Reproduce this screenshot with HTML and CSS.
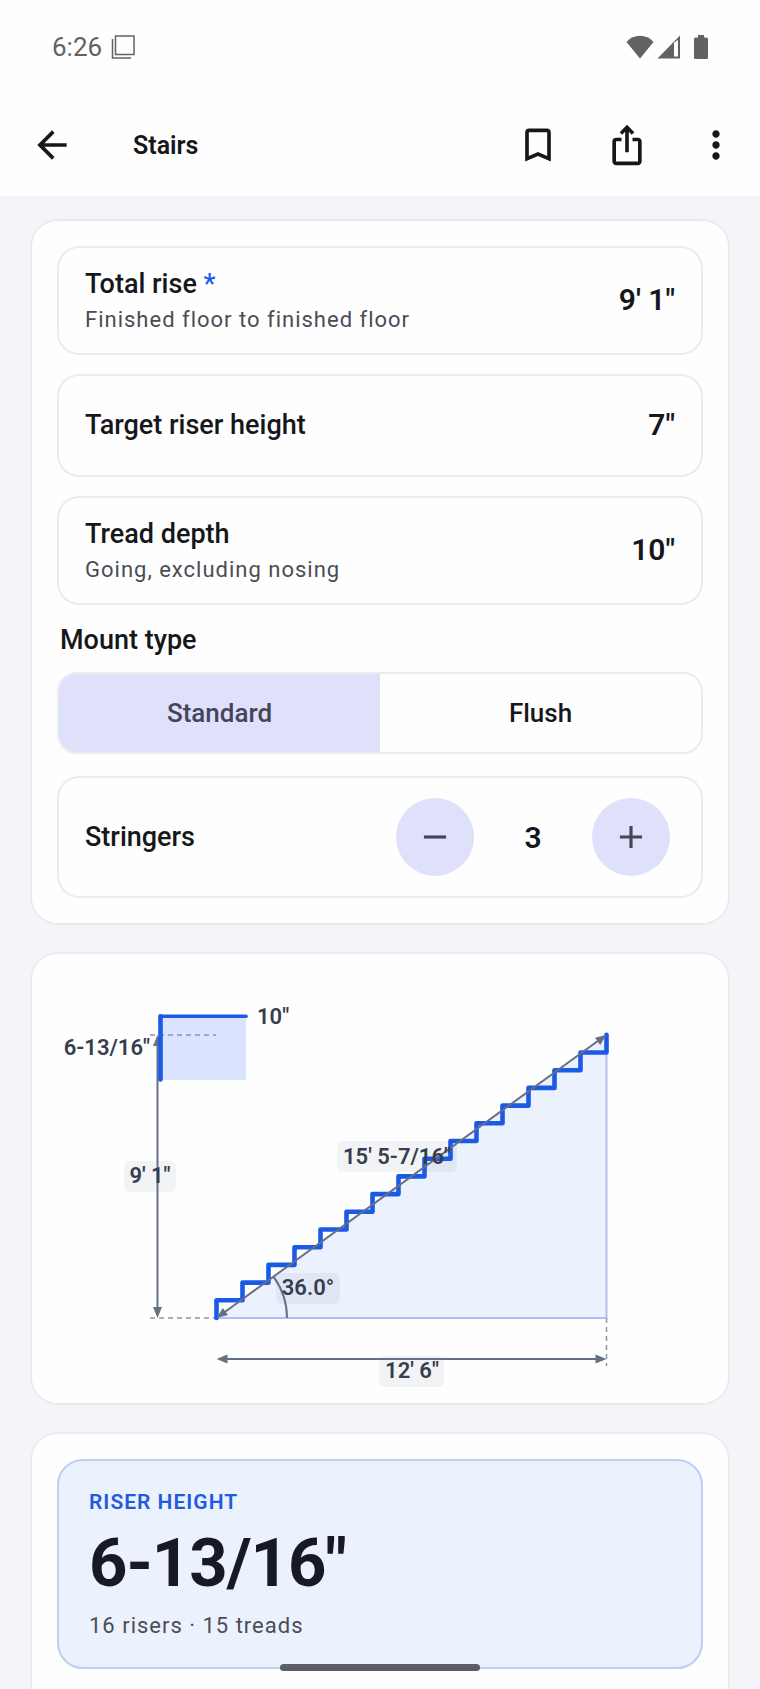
FILE: index.html
```html
<!DOCTYPE html>
<html lang="en">
<head>
  <meta charset="UTF-8" />
  <meta name="viewport" content="width=device-width, initial-scale=1.0" />
  <title>Stairs</title>
  <link rel="stylesheet" href="styles.css">
</head>
<body>
  <div class="status-bar">
    <span class="clock">6:26</span>
    <svg class="status-icon" width="24" height="24" viewBox="0 0 24 24" fill="none" stroke="#626262" stroke-width="1.5">
      <rect x="4.5" y="1" width="18.5" height="18.5" />
      <path d="M1.5 4v19H20" />
    </svg>
    <div class="status-right">
      <svg width="28" height="24" viewBox="0 0 28 24" fill="#626262"><path d="M14 23.500L.5 7Q6 .8 14 .8T27.500 7z" /></svg>
      <svg width="24" height="24" viewBox="0 0 24 24" fill="#626262"><path fill-rule="evenodd" d="M23 .5V23.500H.5zM17 7.500V21.500H21V5z" /></svg>
      <svg class="battery" width="16" height="24" viewBox="0 0 16 24" fill="#626262"><path d="M5 0h6v2.500h2.500Q15 2.500 15 4v18.500Q15 24 13.500 24h-11Q1 24 1 22.500V4Q1 2.500 2.500 2.500H5z" /></svg>
    </div>
  </div>

  <header class="app-bar">
    <button class="icon-btn" aria-label="Back">
      <svg viewBox="0 0 24 24"><path d="M20 11H7.830l5.590-5.590L12 4l-8 8 8 8 1.410-1.410L7.830 13H20v-2z" /></svg>
    </button>
    <h1>Stairs</h1>
    <div class="actions">
      <button class="icon-btn" aria-label="Bookmark">
        <svg viewBox="0 0 24 24"><path d="M17 3H7c-1.100 0-2 .9-2 2v16l7-3 7 3V5c0-1.100-.9-2-2-2zm0 15l-5-2.180L7 18V5h10v13z" /></svg>
      </button>
      <button class="icon-btn" aria-label="Share">
        <svg viewBox="0 0 24 24"><path d="M16 5l-1.420 1.420-1.590-1.590V16h-1.980V4.830L9.420 6.420 8 5l4-4 4 4zm4 5v11c0 1.100-.9 2-2 2H6c-1.110 0-2-.9-2-2V10c0-1.110.89-2 2-2h3v2H6v11h12V10h-3V8h3c1.100 0 2 .89 2 2z" /></svg>
      </button>
      <button class="icon-btn" aria-label="More">
        <svg viewBox="0 0 24 24"><path d="M12 8c1.100 0 2-.9 2-2s-.9-2-2-2-2 .9-2 2 .9 2 2 2zm0 2c-1.100 0-2 .9-2 2s.9 2 2 2 2-.9 2-2-.9-2-2-2zm0 6c-1.100 0-2 .9-2 2s.9 2 2 2 2-.9 2-2-.9-2-2-2z" /></svg>
      </button>
    </div>
  </header>

  <main>
    <section class="card form-card">
      <div class="fields">
        <label class="field">
          <span class="field-text">
            <span class="label">Total rise <span class="required">*</span></span>
            <span class="hint">Finished floor to finished floor</span>
          </span>
          <input class="value" type="text" value="9' 1&quot;">
        </label>
        <label class="field">
          <span class="label">Target riser height</span>
          <input class="value" type="text" value="7&quot;">
        </label>
        <label class="field">
          <span class="field-text">
            <span class="label">Tread depth</span>
            <span class="hint">Going, excluding nosing</span>
          </span>
          <input class="value" type="text" value="10&quot;">
        </label>
      </div>

      <div class="label group-label" id="mount-label">Mount type</div>
      <div class="segmented" role="radiogroup" aria-labelledby="mount-label">
        <label class="segment"><input type="radio" name="mount" checked><span>Standard</span></label>
        <label class="segment"><input type="radio" name="mount"><span>Flush</span></label>
      </div>

      <div class="field stringers">
        <span class="label">Stringers</span>
        <div class="stepper">
          <button class="step-btn" id="minus" aria-label="Fewer stringers">
            <svg viewBox="0 0 24 24"><path d="M19 13H5v-2h14v2z" /></svg>
          </button>
          <output class="value" id="stringers">3</output>
          <button class="step-btn" id="plus" aria-label="More stringers">
            <svg viewBox="0 0 24 24"><path d="M19 13h-6v6h-2v-6H5v-2h6V5h2v6h6v2z" /></svg>
          </button>
        </div>
      </div>
    </section>

    <section class="card">
      <svg class="diagram" viewBox="0 0 696 449" role="img" aria-label="Stair diagram">
        <!-- area under the stringer -->
        <path d="M184.500 364L574.500 80.800V364z" fill="#ecf1fe" />
        <path d="M184.500 364H574.500V81" fill="none" stroke="#adc0f0" stroke-width="2" />

        <!-- riser detail -->
        <rect x="128" y="62" width="86" height="64" fill="#dbe4fe" />

        <g class="guide">
          <path d="M118 81H184" />
          <path d="M118 364H184" />
          <path d="M574.500 364V412" />
        </g>

        <g class="chip">
          <rect x="92" y="207" width="52" height="31" rx="6" />
          <rect x="305" y="187" width="120" height="31" rx="6" />
          <rect x="244" y="319" width="64" height="31" rx="6" />
          <rect x="347" y="402" width="65" height="31" rx="6" />
        </g>

        <!-- rise and run -->
        <g class="dim">
          <path d="M125.500 84V360" />
          <path d="M188 405H570" />
        </g>
        <g class="arrow">
          <path d="M125.500 81l4.500 11h-9z" />
          <path d="M125.500 364l4.500-11h-9z" />
          <path d="M184.500 405l11-4.500v9z" />
          <path d="M574.500 405l-11-4.500v9z" />
        </g>

        <!-- steps: 16 risers, 15 treads -->
        <path class="steps" d="M184.500 364v-17.700h26v-17.700h26v-17.700h26v-17.700h26v-17.700h26v-17.700h26v-17.700h26v-17.700h26v-17.700h26v-17.700h26v-17.700h26v-17.700h26v-17.700h26v-17.700h26v-17.700h26v-17.700" />
        <path class="steps" d="M128.500 125.500V62.300" />
        <path class="steps tread" d="M128.500 62.300H214" />

        <g class="dim">
          <path d="M188 361.500L571 83.300" />
          <path d="M255 364A70.500 70.500 0 0 0 241.500 322.600" />
        </g>
        <g class="arrow">
          <path d="M184.500 364l6.300-10.100 5.200 7.200z" />
          <path d="M574.500 80.800l-6.300 10.100-5.200-7.200z" />
        </g>

        <g class="dim-text">
          <text x="225" y="70">10"</text>
          <text x="118" y="101" text-anchor="end">6-13/16"</text>
          <text x="118" y="229" text-anchor="middle">9' 1"</text>
          <text x="365" y="210" text-anchor="middle">15' 5-7/16"</text>
          <text x="276" y="341" text-anchor="middle">36.0°</text>
          <text x="380" y="424" text-anchor="middle">12' 6"</text>
        </g>
      </svg>
    </section>

    <section class="card result-card">
      <div class="result">
        <div class="result-label">RISER HEIGHT</div>
        <div class="result-value">6-13/16"</div>
        <div class="hint">16 risers · 15 treads</div>
      </div>
    </section>
  </main>

  <div class="home-pill"></div>

  <script>
    const out = document.getElementById("stringers");

    document.getElementById("minus").addEventListener("click", () => {
      out.value = Math.max(2, Number(out.value) - 1);
    });
    document.getElementById("plus").addEventListener("click", () => {
      out.value = Number(out.value) + 1;
    });
  </script>
</body>
</html>
```
FILE: styles.css
```css
* {
  box-sizing: border-box;
}
body {
  margin: 0;
  height: 100vh;
  display: flex;
  flex-direction: column;
  overflow: hidden;
  font-family: Roboto, "Noto Sans", sans-serif;
  color: #15171b;
  background: #f3f5f9;
}
button {
  border: none;
  padding: 0;
  background: none;
  color: inherit;
  cursor: pointer;
}
svg {
  display: block;
}

/* top bars */
.status-bar {
  flex: none;
  display: flex;
  align-items: center;
  height: 92px;
  padding: 2px 51px 0 52px;
  background: #fefefe;
}
.clock {
  font-size: 26px;
  color: #626262;
}
.status-icon {
  margin-left: 9px;
}
.status-right {
  display: flex;
  gap: 3px;
  margin-left: auto;
}
.battery {
  margin-left: 9px;
}
.app-bar {
  flex: none;
  display: flex;
  align-items: center;
  height: 104px;
  padding: 2px 22px 0 30px;
  background: #fefefe;
}
.app-bar h1 {
  margin: 0 0 0 59px;
  font-size: 25px;
  font-weight: 600;
}
.actions {
  display: flex;
  gap: 45px;
  margin-left: auto;
}
.icon-btn svg {
  width: 44px;
  height: 44px;
  fill: #15171b;
}

main {
  flex: 1;
  min-height: 0;
  overflow: hidden;
  padding: 23px 30px 0;
}
.card {
  margin-bottom: 27px;
  border: 2px solid #e9ebee;
  border-radius: 28px;
  background: #fefefe;
}
.form-card {
  padding: 25px;
}

/* input rows */
.fields {
  display: flex;
  flex-direction: column;
  gap: 19px;
}
.field {
  display: flex;
  align-items: center;
  justify-content: space-between;
  min-height: 103px;
  padding: 18px 26px;
  border: 2px solid #e9ebec;
  border-radius: 22px;
}
.field-text {
  display: flex;
  flex-direction: column;
  gap: 2px;
}
.label {
  font-size: 27px;
  line-height: 37px;
  font-weight: 500;
}
.required {
  color: #1f5ae8;
}
.hint {
  font-size: 22px;
  line-height: 30px;
  letter-spacing: 1px;
  color: #4a4d53;
}
.value {
  font-family: inherit;
  font-size: 30px;
  font-weight: 600;
  color: #15171b;
}
input.value {
  width: 160px;
  padding: 0 0 2px;
  border: none;
  outline: none;
  background: none;
  text-align: right;
}
.group-label {
  margin: 17px 3px 13px;
}
.segmented {
  display: flex;
  height: 82px;
  border: 2px solid #e9ebec;
  border-radius: 20px;
  overflow: hidden;
}
.segment {
  flex: 1;
  display: flex;
  position: relative;
  cursor: pointer;
}
.segment input {
  position: absolute;
  opacity: 0;
}
.segment span {
  flex: 1;
  display: flex;
  align-items: center;
  justify-content: center;
  font-size: 26px;
  font-weight: 500;
}
.segment input:checked + span {
  background: #dfe0fa;
  color: #444559;
}
.stringers {
  height: 122px;
  margin-top: 22px;
}
.stepper {
  display: flex;
  align-items: center;
  margin-right: 5px;
}
.stepper .value {
  width: 118px;
  text-align: center;
}
.step-btn {
  display: flex;
  align-items: center;
  justify-content: center;
  width: 78px;
  height: 78px;
  border-radius: 50%;
  background: #dfe0fa;
}
.step-btn svg {
  width: 38px;
  height: 38px;
  fill: #444559;
}

/* diagram */
.diagram {
  width: 100%;
  height: auto;
}
.steps {
  fill: none;
  stroke: #1a5ae6;
  stroke-width: 4.6;
  stroke-linecap: round;
  stroke-linejoin: round;
}
.tread {
  stroke-width: 3.6;
}
.dim {
  fill: none;
  stroke: #667085;
  stroke-width: 2;
}
.arrow {
  fill: #667085;
}
.guide {
  fill: none;
  stroke: #8d95a3;
  stroke-width: 1.5;
  stroke-dasharray: 5 4;
}
.chip {
  fill: #323c50;
  fill-opacity: 0.06;
}
.dim-text {
  font-size: 22px;
  font-weight: 600;
  fill: #363d4e;
}

/* results */
.result-card {
  padding: 25px 25px 60px;
}
.result {
  padding: 26px 30px;
  border: 2px solid #bccdf6;
  border-radius: 26px;
  background: #ecf1fe;
}
.result-label {
  font-size: 21px;
  line-height: 30px;
  font-weight: 600;
  letter-spacing: 1px;
  color: #1f5ae0;
}
.result-value {
  margin: 6px 0 8px;
  font-size: 67px;
  line-height: 80px;
  font-weight: 700;
  letter-spacing: -1px;
  color: #171a22;
}
.home-pill {
  position: fixed;
  left: 50%;
  bottom: 18px;
  width: 200px;
  height: 7px;
  margin-left: -100px;
  border-radius: 4px;
  background: #5b5e67;
}
```
